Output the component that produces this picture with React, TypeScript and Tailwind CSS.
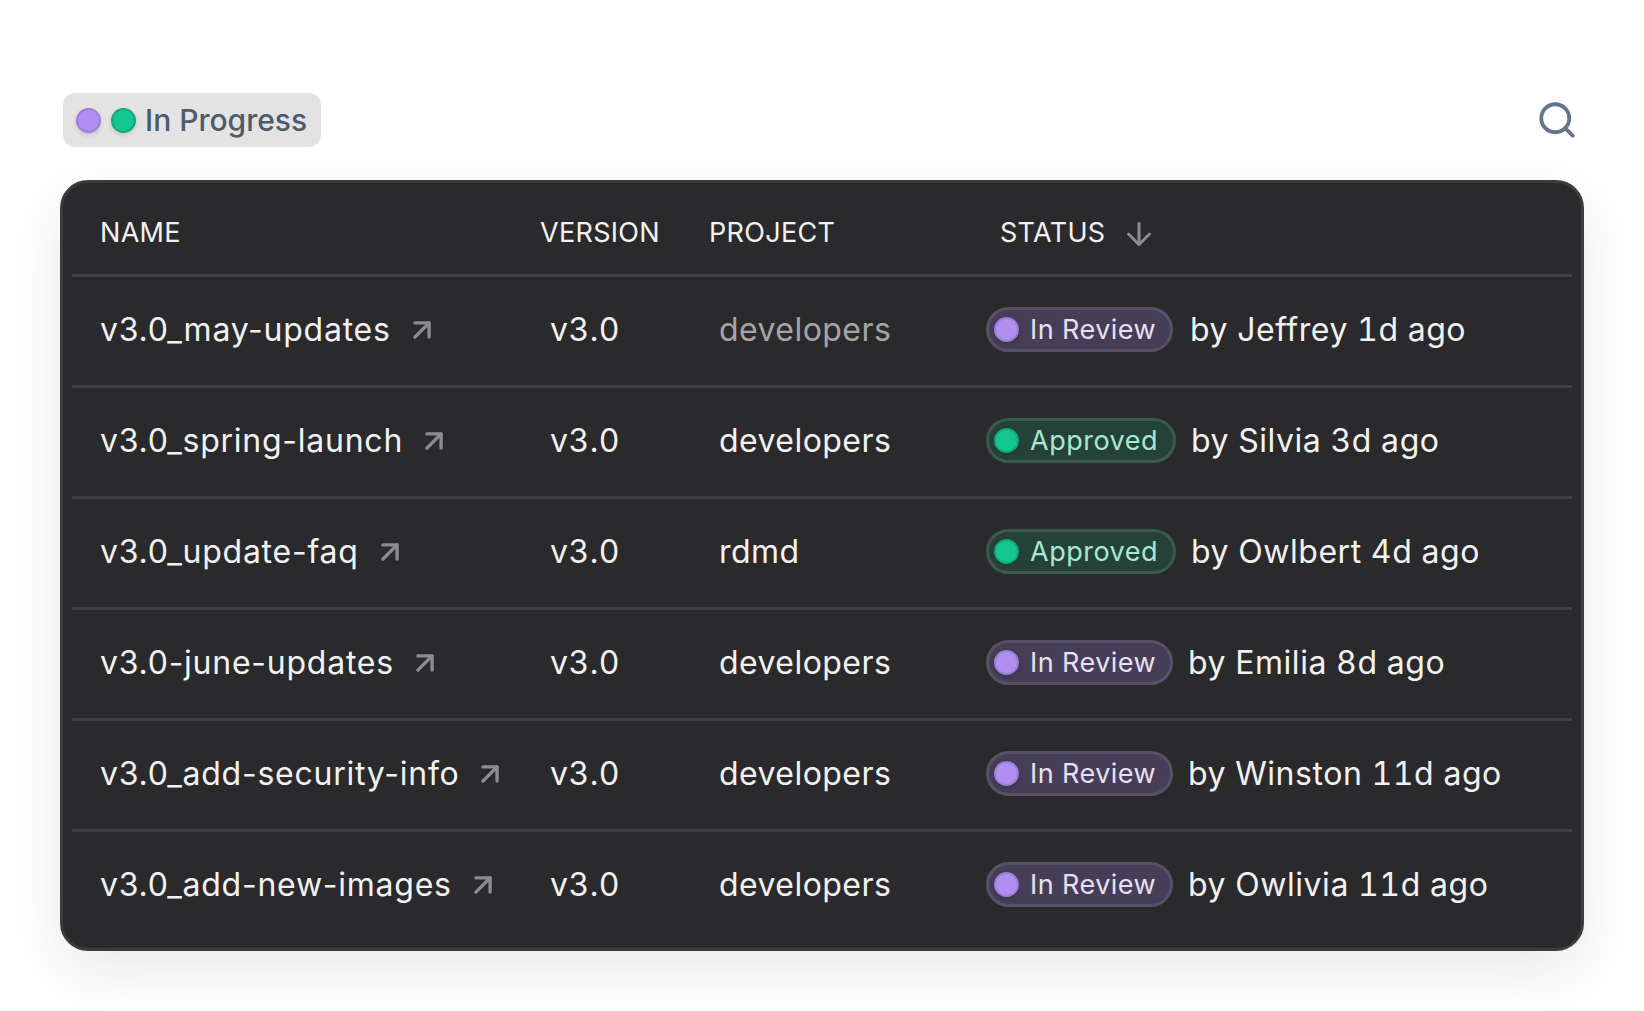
import { ArrowDown, ArrowUpRight, Search } from "lucide-react";

type Row = {
  name: string;
  project: string;
  dim?: boolean;
  status: "review" | "approved";
  by: string;
  byClass: string;
};

const rows: Row[] = [
  { name: "v3.0_may-updates", project: "developers", dim: true, status: "review", by: "by Jeffrey 1d ago", byClass: "ml-[17px]" },
  { name: "v3.0_spring-launch", project: "developers", status: "approved", by: "by Silvia 3d ago", byClass: "ml-[15px]" },
  { name: "v3.0_update-faq", project: "rdmd", status: "approved", by: "by Owlbert 4d ago", byClass: "ml-[15px]" },
  { name: "v3.0-june-updates", project: "developers", status: "review", by: "by Emilia 8d ago", byClass: "ml-[15px]" },
  { name: "v3.0_add-security-info", project: "developers", status: "review", by: "by Winston 11d ago", byClass: "ml-[15px]" },
  { name: "v3.0_add-new-images", project: "developers", status: "review", by: "by Owlivia 11d ago", byClass: "ml-[15px]" },
];

const Dot = ({ color }: { color: "purple" | "green" }) => (
  <span
    className={
      color === "purple"
        ? "h-[25px] w-[25px] shrink-0 rounded-full border-2 border-[#9b7fdc] bg-[#b08ff0] shadow-[0_2px_4px_rgba(0,0,0,0.15)]"
        : "h-[25px] w-[25px] shrink-0 rounded-full border-2 border-[#10a87c] bg-[#14c78f] shadow-[0_2px_4px_rgba(0,0,0,0.15)]"
    }
  />
);

const Badge = ({ status }: { status: Row["status"] }) =>
  status === "review" ? (
    <span className="mb-[2px] flex h-[45px] w-[187px] shrink-0 items-center gap-[11px] rounded-full border-[3px] border-[#575068] bg-[#453e56] pl-[5px] text-[27px] tracking-[0.5px] text-[#e6e0f5]">
      <Dot color="purple" />
      <span className="pt-[2px]">In Review</span>
    </span>
  ) : (
    <span className="mb-[2px] flex h-[45px] w-[190px] shrink-0 items-center gap-[11px] rounded-full border-[3px] border-[#3a5a50] bg-[#25423a] pl-[5px] text-[27px] tracking-[0.5px] text-[#a8e8cf]">
      <Dot color="green" />
      <span className="pt-[2px]">Approved</span>
    </span>
  );

export default function App() {
  return (
    <div className="h-[1011px] w-[1644px] overflow-hidden bg-white px-[60px] pt-[93px] font-['Inter',sans-serif]">
      <div className="flex items-center justify-between pr-[6px]">
        <div className="ml-[3px] flex h-[54px] w-[258px] items-center gap-[9px] rounded-[12px] bg-[#e3e3e4] pl-[13px] text-[30px] font-medium text-[#4f5b6b]">
          <span className="flex items-center gap-[10px]">
            <Dot color="purple" />
            <Dot color="green" />
          </span>
          In Progress
        </div>
        <Search className="h-[42px] w-[42px] text-[#64748b]" strokeWidth={2.2} />
      </div>

      <div className="mt-[33px] h-[771px] w-[1524px] rounded-[28px] border-[3px] border-[#3c3c3e] bg-[#2a2a2c] px-[9px] shadow-[0_20px_60px_rgba(0,0,0,0.09)]">
        <div className="grid h-[94px] grid-cols-[440px_169px_291px_1fr] items-center border-b-[3px] border-[#3f3f41] pl-7 pt-[10px] text-[27px] tracking-[0.3px] text-[#f2f2f2]">
          <span>NAME</span>
          <span>VERSION</span>
          <span>PROJECT</span>
          <span className="flex items-center gap-[16px]">
            STATUS
            <ArrowDown className="h-9 w-9 text-[#8c8c8e]" strokeWidth={2} />
          </span>
        </div>
        {rows.map((row, i) => (
          <div
            key={row.name}
            className={
              i === rows.length - 1
                ? "grid h-[111px] grid-cols-[450px_169px_267px_1fr] items-center border-b-[3px] border-transparent pb-[2px] pl-7 text-[32px] tracking-[0.45px] text-[#f2f2f2]"
                : "grid h-[111px] grid-cols-[450px_169px_267px_1fr] items-center border-b-[3px] border-[#3f3f41] pb-[2px] pl-7 text-[32px] tracking-[0.45px] text-[#f2f2f2]"
            }
          >
            <span className="flex items-center gap-[14px] tracking-[0.75px]">
              {row.name}
              <ArrowUpRight className="h-[34px] w-[34px] text-[#8c8c8e]" strokeWidth={2.4} />
            </span>
            <span className="tabular-nums">v3.0</span>
            <span className={row.dim ? "text-[#a5a5a7]" : ""}>{row.project}</span>
            <span className="flex items-center tabular-nums">
              <Badge status={row.status} />
              <span className={`${row.byClass} tracking-[0.55px]`}>{row.by}</span>
            </span>
          </div>
        ))}
      </div>
    </div>
  );
}
